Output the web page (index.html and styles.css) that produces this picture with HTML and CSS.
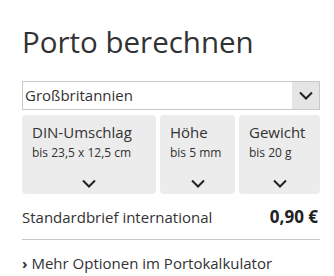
FILE: index.html
```html
<!DOCTYPE html>
<html lang="de">
<head>
    <meta charset="UTF-8">
    <title>Porto berechnen</title>
    <link rel="stylesheet" href="styles.css">
</head>
<body>
    <div class="porto">
        <h1 class="porto-title">Porto berechnen</h1>

        <!-- Destination select -->
        <div class="country">
            <span class="country-name">Großbritannien</span>
            <span class="country-btn">
                <svg width="14" height="9" viewBox="0 0 14 9"><path d="M1 1.5 L7 7.5 L13 1.5" fill="none" stroke="#222" stroke-width="2"/></svg>
            </span>
        </div>

        <!-- Format cards -->
        <div class="cards">
            <div class="card">
                <div class="card-title">DIN-Umschlag</div>
                <div class="card-sub">bis 23,5 x 12,5 cm</div>
                <svg class="card-arrow" width="14" height="9" viewBox="0 0 14 9"><path d="M1 1.5 L7 7.5 L13 1.5" fill="none" stroke="#222" stroke-width="2"/></svg>
            </div>
            <div class="card">
                <div class="card-title">Höhe</div>
                <div class="card-sub">bis 5 mm</div>
                <svg class="card-arrow" width="14" height="9" viewBox="0 0 14 9"><path d="M1 1.5 L7 7.5 L13 1.5" fill="none" stroke="#222" stroke-width="2"/></svg>
            </div>
            <div class="card">
                <div class="card-title">Gewicht</div>
                <div class="card-sub">bis 20 g</div>
                <svg class="card-arrow" width="14" height="9" viewBox="0 0 14 9"><path d="M1 1.5 L7 7.5 L13 1.5" fill="none" stroke="#222" stroke-width="2"/></svg>
            </div>
        </div>

        <div class="result">
            <span>Standardbrief international</span>
            <span class="price">0,90 €</span>
        </div>

        <a class="more" href="#"><span class="more-arrow">›</span> Mehr Optionen im Portokalkulator</a>
    </div>
</body>
</html>
```

FILE: styles.css
```css
body, html {
    margin: 0;
    padding: 0;
    background: #fff;
    font-family: "Open Sans", sans-serif;
    color: #323232;
}
.porto {
    width: 298px;
    padding: 0 0 0 22px;
}
.porto-title {
    margin: 0;
    padding-top: 23px;
    font-size: 29.5px;
    line-height: 38px;
    font-weight: normal;
    color: #323232;
}
/* Select box */
.country {
    display: flex;
    height: 27px;
    margin-top: 20px;
    border: 1px solid #c8c8c8;
}
.country-name {
    flex: 1;
    padding-left: 2px;
    font-size: 15px;
    line-height: 27px;
}
.country-btn {
    width: 27px;
    display: flex;
    align-items: center;
    justify-content: center;
    background: #e5e5e5;
}
/* Cards */
.cards {
    display: grid;
    grid-template-columns: 134px 75px 81px;
    gap: 4px;
    margin-top: 5px;
}
.card {
    background: #ececec;
    border-radius: 4px;
    height: 79px;
    padding: 7px 0 0 10px;
    box-sizing: border-box;
    display: flex;
    flex-direction: column;
}
.card-title {
    font-size: 15px;
    line-height: 20px;
}
.card-sub {
    font-size: 12px;
    line-height: 20px;
    margin-top: 1px;
}
.card-arrow {
    align-self: center;
    margin: 16px 0 0 -10px;
}
.result {
    display: flex;
    justify-content: space-between;
    align-items: baseline;
    padding: 13px 2px 12px 0;
    border-bottom: 1px solid #c8c8c8;
    font-size: 15px;
    line-height: 20px;
}
.price {
    font-weight: bold;
    font-size: 17px;
    color: #222;
}
.more {
    display: block;
    margin-top: 13px;
    font-size: 15px;
    line-height: 20px;
    color: #323232;
    text-decoration: none;
}
.more-arrow {
    font-weight: bold;
}
```
